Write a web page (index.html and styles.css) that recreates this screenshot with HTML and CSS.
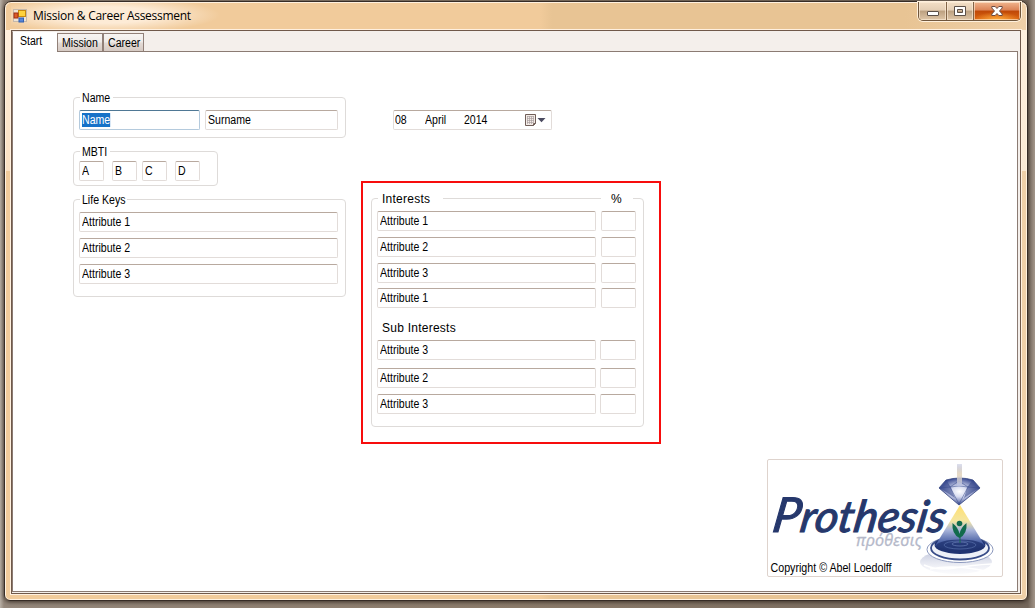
FILE: index.html
```html
<!DOCTYPE html>
<html lang="en">
<head>
<meta charset="utf-8">
<title>Mission &amp; Career Assessment</title>
<link rel="stylesheet" href="styles.css">
</head>
<body>
<div class="window">
  <header class="titlebar">
    <svg class="app-icon" width="14" height="14" viewBox="0 0 14 14">
      <rect x=".5" y=".5" width="13" height="12" fill="#eee3d6" stroke="#c5b8aa"/>
      <rect x="5.5" y="1.5" width="7" height="6" fill="#ffd23c" stroke="#c98a10"/>
      <rect x="1" y="4" width="4" height="5" fill="#dc5a28" stroke="#9d2e12"/>
      <rect x="6" y="9" width="4.500" height="4" fill="#5685d8" stroke="#315faf"/>
    </svg>
    <h1 class="title">Mission &amp; Career Assessment</h1>
    <div class="controls">
      <span class="control minimize"><svg width="14" height="14" viewBox="0 0 14 14"><rect x="1.500" y="6.500" width="11" height="4" rx=".5" fill="#fff" stroke="#5c5048"/></svg></span>
      <span class="control maximize"><svg width="14" height="14" viewBox="0 0 14 14"><path d="M1.500 1.500h11v9h-11zM4.500 4.500v3h5v-3z" fill="#fff" fill-rule="evenodd" stroke="#5c5048"/></svg></span>
      <span class="control close"><svg width="14" height="14" viewBox="0 0 14 14"><path d="M1.800 1.500h3.400L7 3.500l1.800-2h3.400v1.500L9.500 6l2.700 3v1.500H8.800L7 8.500l-1.800 2H1.800V9l2.700-3-2.700-3z" fill="#fff" stroke="#6a4a42"/></svg></span>
    </div>
  </header>
  <main class="client">
    <nav class="tabs">
      <span class="tab active"><span class="t">Start</span></span>
      <span class="tab mission"><span class="t">Mission</span></span>
      <span class="tab career"><span class="t">Career</span></span>
    </nav>
    <section class="page">
      <div class="left">
        <div class="group name-group">
          <span class="legend"><span class="t">Name</span></span>
          <div class="field first-name"><span class="t selected">Name</span></div>
          <div class="field surname"><span class="t">Surname</span></div>
        </div>
        <div class="group mbti-group">
          <span class="legend mbti-legend"><span class="t">MBTI</span></span>
          <div class="field letter"><span class="t">A</span></div>
          <div class="field letter b"><span class="t">B</span></div>
          <div class="field letter c"><span class="t">C</span></div>
          <div class="field letter d"><span class="t">D</span></div>
        </div>
        <div class="group keys-group">
          <span class="legend keys-legend"><span class="t">Life Keys</span></span>
          <div class="field"><span class="t">Attribute 1</span></div>
          <div class="field"><span class="t">Attribute 2</span></div>
          <div class="field"><span class="t">Attribute 3</span></div>
        </div>
      </div>
      <div class="middle">
        <div class="field date">
          <span class="t day">08</span><span class="t month">April</span><span class="t year">2014</span>
          <svg width="21" height="13" viewBox="0 0 21 13">
            <path d="M.5.500h10v9l-2 2h-8z" fill="#f3ece7" stroke="#705e58"/>
            <path d="M2.500 2v8M4.500 2v8M6.500 2v8M8.500 2v6M2 2.500h7M2 4.500h7M2 6.500h7M2 8.500h7" stroke="#aaa1a0" stroke-width=".7"/>
            <path d="M8.500 11.500v-2h2" fill="none" stroke="#705e58"/>
            <path d="M12.500 4h8l-4 4.300z" fill="#4b4b60"/>
          </svg>
        </div>
        <div class="highlight">
          <div class="group interests">
            <span class="legend interests-legend">Interests</span>
            <span class="legend percent-legend">%</span>
            <div class="row"><div class="field"><span class="t">Attribute 1</span></div><div class="field pct"></div></div>
            <div class="row"><div class="field"><span class="t">Attribute 2</span></div><div class="field pct"></div></div>
            <div class="row"><div class="field"><span class="t">Attribute 3</span></div><div class="field pct"></div></div>
            <div class="row last"><div class="field"><span class="t">Attribute 1</span></div><div class="field pct"></div></div>
            <h2 class="subhead">Sub Interests</h2>
            <div class="row sub first"><div class="field"><span class="t">Attribute 3</span></div><div class="field pct"></div></div>
            <div class="row sub"><div class="field"><span class="t">Attribute 2</span></div><div class="field pct"></div></div>
            <div class="row sub"><div class="field"><span class="t">Attribute 3</span></div><div class="field pct"></div></div>
          </div>
        </div>
      </div>
      <div class="logo">
        <svg width="234" height="116" viewBox="768 460 234 116">
          <defs>
            <linearGradient id="beam" x1="0" y1="0" x2="0" y2="1"><stop offset="0" stop-color="#b9bedb" stop-opacity=".3"/><stop offset=".5" stop-color="#eadcc4"/><stop offset="1" stop-color="#b7c0e4"/></linearGradient>
            <linearGradient id="cone" x1="0" y1="0" x2="0" y2="1"><stop offset="0" stop-color="#ffe070"/><stop offset=".35" stop-color="#f5e6a0"/><stop offset=".55" stop-color="#a9b5da"/><stop offset=".85" stop-color="#4159a0"/><stop offset="1" stop-color="#203575"/></linearGradient>
            <radialGradient id="gem"><stop offset="0" stop-color="#fff"/><stop offset=".4" stop-color="#d5daf0"/><stop offset="1" stop-color="#3a4b92"/></radialGradient>
            <linearGradient id="reflection" x1="0" y1="0" x2="0" y2="1"><stop offset="0" stop-color="#8f98bf"/><stop offset="1" stop-color="#e8eaf3" stop-opacity=".3"/></linearGradient>
          </defs>
          <ellipse cx="956" cy="562" rx="36" ry="12" fill="url(#reflection)" opacity=".6"/>
          <path d="M924 565q14 6 31 3t37-4M930 569q24-5 55 2" fill="none" stroke="#fff" stroke-width="1.500"/>
          <ellipse cx="960" cy="549.500" rx="33" ry="13" fill="#fff" stroke="#8b98bd"/>
          <ellipse cx="960" cy="548" rx="29" ry="11.500" fill="#eef1f8" stroke="#384c88" stroke-width="1.800"/>
          <ellipse cx="960" cy="545" rx="25.500" ry="9" fill="#203371"/>
          <path d="M960 505L935 546q25 9 50 0z" fill="url(#cone)"/>
          <ellipse cx="960" cy="546" rx="24" ry="6.500" fill="#203371" opacity=".8"/>
          <ellipse cx="960" cy="545" rx="16" ry="4" fill="none" stroke="#5870aa" stroke-width=".7"/>
          <ellipse cx="960" cy="544" rx="8" ry="2" fill="none" stroke="#6a80b8" stroke-width=".7"/>
          <rect x="957" y="464" width="5" height="18" fill="url(#beam)"/>
          <path d="M946 480q14-4 27 0l7 8-21 17-20-17z" fill="url(#gem)" stroke="#35457f" stroke-width=".8"/>
          <path d="M940 488l10-1 9 17 9-17 11 1M946 480l4 7 9-6 9 6 5-7M950 487l9-1 9 1" fill="none" stroke="#354988" stroke-width=".5"/>
          <path d="M940 488l6-7 5 7 4 10zM979 488l-6-7-6 7-3 10z" fill="#384a8c" opacity=".6"/>
          <path d="M957 464h5v22h-5z" fill="url(#beam)" opacity=".8"/>
          <circle cx="959.500" cy="523.500" r="2.800" fill="#126b4d"/>
          <path d="M959.500 538q-8-4-7-15 6 5 7 11 1-6 7-11 1 11-7 15z" fill="#126b4d"/>
          <path d="M960 536v7" stroke="#126b4d"/>
          <text class="brand" transform="translate(771 531.500) skewX(-9)" textLength="173" lengthAdjust="spacingAndGlyphs"><tspan class="initial">P</tspan>rothesis</text>
          <text class="greek" x="856" y="546" textLength="66" lengthAdjust="spacingAndGlyphs">πρόθεσις</text>
          <text class="copyright" x="770.500" y="572" textLength="121" lengthAdjust="spacingAndGlyphs">Copyright © Abel Loedolff</text>
        </svg>
      </div>
    </section>
  </main>
</div>
</body>
</html>
```
FILE: styles.css
```css
* { box-sizing: border-box; }

body {
  margin: 0;
  width: 1035px;
  height: 608px;
  padding: 1px 7px 7px 4px;
  overflow: hidden;
  background: linear-gradient(90deg, #b8afa5 0, #94877b 4px, #8b7b6a 50%, #74675b 1028px, #a3968a 1035px);
  font: 12px/14px "Liberation Sans", Arial, sans-serif;
  color: #000;
}

.window {
  height: 600px;
  padding: 0 6px 5px;
  border: 1px solid #362c26;
  border-radius: 7px 7px 6px 6px;
  box-shadow: inset 0 0 0 1px #fff1df, 0 1px 4px #3b3028;
  background:
    linear-gradient(#fff0de, #fff0de) 0 0 / 1px 100% no-repeat,
    linear-gradient(#fff0de, #fae0c1) 0 28px / 6px 141px no-repeat,
    linear-gradient(#fff0de, #fae9d4) 100% 28px / 6px 141px no-repeat,
    linear-gradient(90deg, #f1cb9b 0, #f1cb9b 535px, #e8c494 547px, #e8c494 900px, #efd0a9 100%);
}

.titlebar {
  display: flex;
  height: 27px;
  padding: 7px 0 0 2px;
  background: radial-gradient(ellipse 115px 18px at 94px 13px, #fff0dfdd 45%, #fff0df00 100%);
}

.app-icon { flex: none; }

.title {
  margin: -1px 0 0 6px;
  font: 12px/16px "Open Sans", "Noto Sans", sans-serif;
  letter-spacing: -.27px;
  white-space: nowrap;
}

.controls {
  display: flex;
  width: 103px;
  height: 19px;
  margin: -7px 0 0 auto;
  border: 1px solid #70563c;
  border-top: 0;
  border-radius: 0 0 5px 5px;
  box-shadow: 0 0 0 1px #fff0dc;
  overflow: hidden;
}

.control {
  display: flex;
  width: 28px;
  align-items: flex-start;
  justify-content: center;
  padding-top: 3px;
  border-right: 1px solid #816447;
  background: linear-gradient(#f3dfc6 0, #e4ceb4 45%, #bca080 50%, #dfc6a7 100%);
  box-shadow: inset 0 0 0 1px #fff0dc99;
}

.maximize { width: 27px; }

.close {
  width: 46px;
  border: 0;
  background: radial-gradient(ellipse 24px 8px at 50% 100%, #ffae3f, #ffae3f00), linear-gradient(#f0b58e 0, #db8356 45%, #bf4807 50%, #dc6410 100%);
}

.client {
  height: 564px;
  margin-top: 1px;
  padding: 0 2px 1px 0;
  border: 1px solid #70594a;
  box-shadow: 0 0 0 1px #fff0df;
  background: #f4efeb;
}

.tabs {
  display: flex;
  height: 20px;
  align-items: flex-end;
}

.tab {
  height: 18px;
  padding: 2px 0 0 4px;
  border: 1px solid #918078;
  border-bottom: 0;
  background: linear-gradient(#f7f4f2 0, #efebe8 48%, #e3dbd6 52%, #d6cac3 100%);
}

.tab.active {
  position: relative;
  width: 45px;
  height: 21px;
  margin-bottom: -1px;
  padding: 2px 0 0 7px;
  border-top-color: #f4efeb;
  border-right: 0;
  background: #fff;
}

.mission { width: 46px; }
.career { width: 41px; }

.t {
  display: inline-block;
  transform: scaleX(.88);
  transform-origin: 0 50%;
  white-space: nowrap;
}

.page {
  display: flex;
  height: 541px;
  padding: 45px 0 0 60px;
  border: 1px solid #8b7b73;
  background: #fff;
}

.left { width: 273px; }

.group {
  position: relative;
  border: 1px solid #dedbd9;
  border-radius: 4px;
}

.legend {
  position: absolute;
  top: -7px;
  left: 6px;
  width: 33px;
  height: 14px;
  padding-left: 2px;
  background: #fff;
}

.mbti-legend { width: 30px; }
.keys-legend { width: 47px; }

.field {
  height: 20px;
  padding: 2px 0 0 2px;
  border: 1px solid #e2dcd9;
  border-top-color: #b8a99f;
  border-radius: 2px;
  background: #fff;
}

.name-group {
  display: flex;
  gap: 5px;
  height: 41px;
  padding: 12px 7px 0 5px;
}

.first-name {
  width: 121px;
  border-color: #b4cadd;
  border-top-color: #4f7895;
}

.selected {
  background: #1672c8;
  color: #fff;
}

.surname { width: 133px; }

.mbti-group {
  display: flex;
  width: 145px;
  height: 35px;
  margin-top: 13px;
  padding: 9px 0 0 5px;
}

.letter { width: 25px; }
.b { margin-left: 8px; }
.c { margin-left: 5px; }
.d { margin-left: 8px; }

.keys-group {
  display: grid;
  grid-auto-rows: 20px;
  row-gap: 6px;
  height: 98px;
  margin-top: 13px;
  padding: 12px 7px 0 5px;
}

.middle {
  width: 300px;
  margin-left: 15px;
}

.date {
  display: flex;
  width: 159px;
  margin: 13px 0 0 32px;
}

.day { width: 30px; margin-left: -1px; }
.month { width: 39px; }
.year { width: 61px; }
.date svg { flex: none; margin-top: 1px; }

.highlight {
  height: 263px;
  margin-top: 51px;
  padding: 15px 15px 0 8px;
  border: 2px solid #f70d0d;
}

.interests {
  width: 273px;
  height: 229px;
  padding: 12px 7px 0 5px;
}

.interests-legend {
  width: 65px;
  padding-left: 4px;
  letter-spacing: .25px;
}

.percent-legend {
  left: 229px;
  width: 32px;
  padding-left: 10px;
}

.row {
  display: grid;
  grid-template-columns: 219px 35px;
  column-gap: 5px;
  margin-bottom: 6px;
}

.row:nth-of-type(3) { margin-bottom: 5px; }
.row.last { margin-bottom: 0; }

.subhead {
  height: 32px;
  margin: 0;
  padding: 13px 0 0 5px;
  font-size: 12px;
  font-weight: 400;
  line-height: 14px;
  letter-spacing: .25px;
}

.sub { grid-template-columns: 219px 36px; column-gap: 4px; }
.sub.first { margin-bottom: 8px; }

.logo {
  width: 236px;
  height: 118px;
  margin: auto 0 14px 106px;
  border: 1px solid #ded3cd;
  border-radius: 2px;
}

.logo svg { display: block; }

.brand {
  font: italic 400 44px Lato, sans-serif;
  fill: #26386c;
  stroke: #26386c;
  stroke-width: 1.1px;
}

.initial { font-size: 48px; }

.greek {
  font: italic 16px "Open Sans", "Noto Sans", sans-serif;
  fill: #b4b8c9;
  stroke: #b4b8c9;
  stroke-width: .3px;
}

.copyright { font: 12px "Liberation Sans", Arial, sans-serif; }
```
